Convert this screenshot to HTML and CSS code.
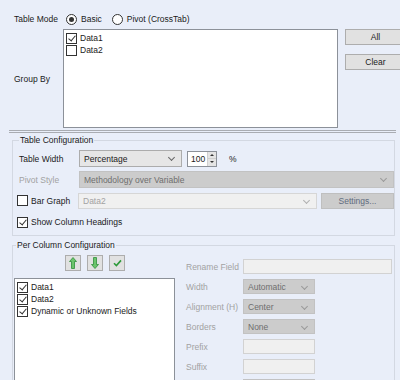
FILE: index.html
```html
<!DOCTYPE html>
<html lang="en">
<head>
    <meta charset="UTF-8">
    <title>Table Configuration</title>
    <link rel="stylesheet" href="styles.css">
</head>
<body>
    <div class="panel">
        <div class="mode-row">
            <span class="mode-label">Table Mode</span>
            <label class="radio"><span class="rb on"></span>Basic</label>
            <label class="radio"><span class="rb"></span>Pivot (CrossTab)</label>
        </div>

        <div class="group-by">
            <span class="group-label">Group By</span>
            <div class="listbox top-list">
                <div class="item"><span class="cb checked"></span>Data1</div>
                <div class="item"><span class="cb"></span>Data2</div>
            </div>
            <div class="side-btns">
                <button class="btn">All</button>
                <button class="btn">Clear</button>
            </div>
        </div>

        <div class="splitter"></div>

        <fieldset class="group table-config">
            <legend>Table Configuration</legend>
            <div class="cfg-row">
                <span class="row-label">Table Width</span>
                <div class="combo width-combo">Percentage</div>
                <div class="spin">
                    <span class="spin-value">100</span>
                    <span class="spin-arrows"><i class="up"></i><i class="down"></i></span>
                </div>
                <span class="pct">%</span>
            </div>
            <div class="cfg-row">
                <span class="row-label muted">Pivot Style</span>
                <div class="combo disabled pivot-combo">Methodology over Variable</div>
            </div>
            <div class="cfg-row">
                <label class="check-label"><span class="cb"></span>Bar Graph</label>
                <div class="combo faded bar-combo">Data2</div>
                <button class="btn disabled settings">Settings...</button>
            </div>
            <div class="cfg-row short">
                <label class="check-label"><span class="cb checked"></span>Show Column Headings</label>
            </div>
        </fieldset>

        <fieldset class="group column-config">
            <legend>Per Column Configuration</legend>
            <div class="col-grid">
                <div class="col-left">
                    <div class="order-btns">
                        <button class="icon-btn">
                            <svg width="8" height="12" viewBox="0 0 8 12"><path d="M4 0.5 L7.5 4.5 L5.5 4.5 L5.5 11.5 L2.5 11.5 L2.5 4.5 L0.5 4.5 Z" fill="#6cc46c" stroke="#2f8f3a" stroke-width="0.8"/></svg>
                        </button>
                        <button class="icon-btn">
                            <svg width="8" height="12" viewBox="0 0 8 12"><path d="M4 11.5 L7.5 7.5 L5.5 7.5 L5.5 0.5 L2.5 0.5 L2.5 7.5 L0.5 7.5 Z" fill="#6cc46c" stroke="#2f8f3a" stroke-width="0.8"/></svg>
                        </button>
                        <button class="icon-btn">
                            <svg width="9" height="8" viewBox="0 0 9 8"><path d="M1 4.2 L3.4 6.6 L8 1.4" fill="none" stroke="#2e9a3a" stroke-width="1.6"/></svg>
                        </button>
                    </div>
                    <div class="listbox field-list">
                        <div class="item"><span class="cb checked"></span>Data1</div>
                        <div class="item"><span class="cb checked"></span>Data2</div>
                        <div class="item"><span class="cb checked"></span>Dynamic or Unknown Fields</div>
                    </div>
                </div>
                <div class="col-right">
                    <div class="prop-row">
                        <span class="prop-label">Rename Field</span>
                        <div class="textbox wide"></div>
                    </div>
                    <div class="prop-row">
                        <span class="prop-label">Width</span>
                        <div class="combo disabled small">Automatic</div>
                    </div>
                    <div class="prop-row">
                        <span class="prop-label">Alignment (H)</span>
                        <div class="combo disabled small">Center</div>
                    </div>
                    <div class="prop-row">
                        <span class="prop-label">Borders</span>
                        <div class="combo disabled small">None</div>
                    </div>
                    <div class="prop-row">
                        <span class="prop-label">Prefix</span>
                        <div class="textbox"></div>
                    </div>
                    <div class="prop-row">
                        <span class="prop-label">Suffix</span>
                        <div class="textbox"></div>
                    </div>
                    <div class="prop-row">
                        <span class="prop-label"></span>
                        <div class="combo disabled small"></div>
                    </div>
                </div>
            </div>
        </fieldset>
    </div>
</body>
</html>
```

FILE: styles.css
```css
:root {
    --bg: #e9eef9;
    --frame: #d3d8e2;
    --box-border: #8c9199;
    --text: #1a1a1a;
    --muted: #a2a2a2;
}
* {
    box-sizing: border-box;
}
body {
    margin: 0;
    width: 400px;
    height: 380px;
    overflow: hidden;
    background: var(--bg);
    font-family: "Liberation Sans", Arial, sans-serif;
    font-size: 8.5px;
    color: var(--text);
}
button {
    font: inherit;
    color: inherit;
    margin: 0;
    padding: 0;
}
.panel {
    height: 380px;
    overflow: hidden;
}

/* table mode */
.mode-row {
    display: flex;
    align-items: center;
    height: 14px;
    margin-top: 12px;
    padding-left: 14px;
}
.mode-label {
    width: 52px;
}
.radio {
    display: flex;
    align-items: center;
    margin-right: 10px;
}
.rb {
    width: 11px;
    height: 11px;
    border: 1px solid #333;
    border-radius: 50%;
    background: white;
    margin-right: 4px;
    position: relative;
}
.rb.on::after {
    content: "";
    position: absolute;
    left: 2px;
    top: 2px;
    width: 5px;
    height: 5px;
    border-radius: 50%;
    background: #333;
}

/* group by */
.group-by {
    display: grid;
    grid-template-columns: 49px 275px 1fr;
    margin-top: 3px;
    padding-left: 14px;
}
.group-label {
    align-self: center;
}
.listbox {
    background: white;
    border: 1px solid var(--box-border);
    padding: 2px 2px;
}
.top-list {
    height: 99px;
}
.item {
    display: flex;
    align-items: center;
    height: 12px;
}
.cb {
    width: 11px;
    height: 11px;
    border: 1px solid #333;
    background: white;
    margin-right: 3px;
    position: relative;
    flex: none;
}
.cb.checked::after {
    content: "";
    position: absolute;
    left: 3px;
    top: 0px;
    width: 3px;
    height: 6px;
    border-right: 1px solid #333;
    border-bottom: 1px solid #333;
    transform: rotate(40deg);
}
.side-btns {
    display: flex;
    flex-direction: column;
    gap: 9px;
    margin-left: 7px;
    margin-right: -6px;
}
.btn {
    height: 16px;
    background: #e1e1e1;
    border: 1px solid #adadad;
}
.btn.disabled {
    background: #cccccc;
    border-color: #bfbfbf;
    color: #5f6b7e;
}

.splitter {
    height: 3px;
    margin: 2px 4px 0 9px;
    border-top: 1px solid #a9acb2;
    border-bottom: 1px solid #a9acb2;
}

/* group boxes */
.group {
    margin: 1px 5px 0 12px;
    border: 1px solid var(--frame);
    padding: 0 0 0 4px;
    min-width: 0;
}
.group legend {
    line-height: 12px;
    padding: 0 1px;
    margin-left: 2px;
}
.table-config {
    padding-bottom: 6px;
}
.cfg-row {
    display: flex;
    align-items: center;
    height: 17px;
    margin-top: 4px;
}
.cfg-row.short {
    height: 14px;
    margin-top: 6px;
}
.row-label {
    width: 62px;
    padding-left: 2px;
}
.muted {
    color: var(--muted);
}
.check-label {
    display: flex;
    align-items: center;
    width: 61px;
    white-space: nowrap;
}

.combo {
    display: flex;
    align-items: center;
    height: 100%;
    border: 1px solid #acacac;
    background: #e6e6e6;
    padding-left: 4px;
    position: relative;
}
.combo::after {
    content: "";
    position: absolute;
    right: 7px;
    top: 4px;
    width: 4px;
    height: 4px;
    border-right: 1px solid #666;
    border-bottom: 1px solid #666;
    transform: rotate(45deg);
}
.combo.disabled {
    background: #cccccc;
    border-color: #c2c2c2;
    color: #6e6e6e;
}
.combo.disabled::after {
    border-color: #9a9a9a;
}
.combo.faded {
    background: #f0f0f0;
    border-color: #d6d6d6;
    color: var(--muted);
}
.combo.faded::after {
    border-color: #b0b0b0;
}
.width-combo {
    width: 103px;
}
.pivot-combo {
    width: 315px;
}
.bar-combo {
    width: 239px;
    height: 16px;
}
.settings {
    width: 73px;
    margin-left: 4px;
}

.spin {
    display: flex;
    width: 30px;
    height: 16px;
    margin-left: 5px;
    border: 1px solid #8c9199;
    background: white;
}
.spin-value {
    flex: 1;
    padding-left: 3px;
    line-height: 14px;
}
.spin-arrows {
    display: flex;
    flex-direction: column;
    width: 9px;
    background: #e4e4e4;
    border-left: 1px solid #cfcfcf;
}
.spin-arrows i {
    flex: 1;
    position: relative;
}
.spin-arrows .up {
    border-bottom: 1px solid #cfcfcf;
}
.spin-arrows i::after {
    content: "";
    position: absolute;
    left: 2px;
    border-left: 2px solid transparent;
    border-right: 2px solid transparent;
}
.spin-arrows .up::after {
    top: 2px;
    border-bottom: 2px solid #333;
}
.spin-arrows .down::after {
    top: 2px;
    border-top: 2px solid #333;
}
.pct {
    margin-left: 12px;
}

/* per column */
.column-config {
    margin-top: 3px;
    height: 143px;
    overflow: hidden;
    border-bottom: none;
    padding-left: 1px;
}
.col-grid {
    display: flex;
}
.col-left {
    width: 161px;
}
.order-btns {
    display: flex;
    justify-content: center;
    gap: 6px;
    margin-top: 4px;
    padding-left: 1px;
}
.icon-btn {
    width: 16px;
    height: 16px;
    display: flex;
    align-items: center;
    justify-content: center;
    background: #e1e1e1;
    border: 1px solid #adadad;
}
.field-list {
    height: 110px;
    margin-top: 7px;
    border-bottom: none;
}
.col-right {
    margin-left: 11px;
    padding-top: 8px;
}
.prop-row {
    display: flex;
    align-items: center;
    height: 15px;
    margin-bottom: 5px;
    color: var(--muted);
}
.prop-label {
    width: 57px;
}
.textbox {
    width: 72px;
    height: 100%;
    border: 1px solid #d2d2d2;
    background: #f0f0f0;
}
.textbox.wide {
    width: 149px;
}
.combo.small {
    width: 72px;
}
```
